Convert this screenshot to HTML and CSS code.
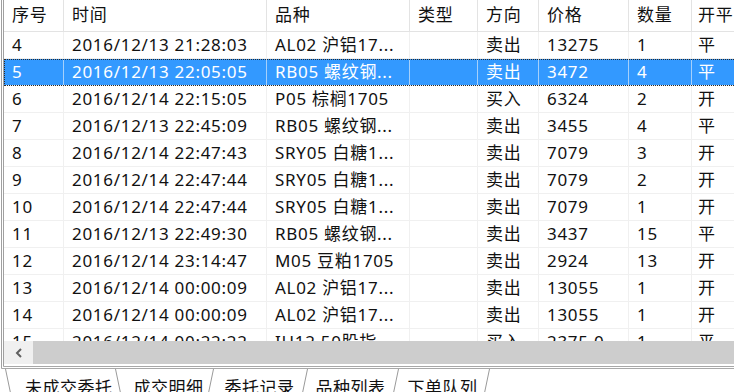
FILE: index.html
```html
<!DOCTYPE html>
<html lang="zh-CN">
<head>
<meta charset="utf-8">
<title>成交明细</title>
<link rel="stylesheet" href="styles.css">
</head>
<body>
<div class="frame">
  <div class="row head">
    <div class="c">序号</div><div class="c">时间</div><div class="c">品种</div><div class="c">类型</div><div class="c">方向</div><div class="c">价格</div><div class="c">数量</div><div class="c last">开平</div>
  </div>
  <div class="body">
    <div class="row"><div class="c">4</div><div class="c">2016/12/13 21:28:03</div><div class="c">AL02 沪铝17...</div><div class="c"></div><div class="c">卖出</div><div class="c">13275</div><div class="c">1</div><div class="c last">平</div></div>
    <div class="row sel"><div class="c">5</div><div class="c">2016/12/13 22:05:05</div><div class="c">RB05 螺纹钢...</div><div class="c"></div><div class="c">卖出</div><div class="c">3472</div><div class="c">4</div><div class="c last">平</div></div>
    <div class="row"><div class="c">6</div><div class="c">2016/12/14 22:15:05</div><div class="c">P05 棕榈1705</div><div class="c"></div><div class="c">买入</div><div class="c">6324</div><div class="c">2</div><div class="c last">开</div></div>
    <div class="row"><div class="c">7</div><div class="c">2016/12/13 22:45:09</div><div class="c">RB05 螺纹钢...</div><div class="c"></div><div class="c">卖出</div><div class="c">3455</div><div class="c">4</div><div class="c last">平</div></div>
    <div class="row"><div class="c">8</div><div class="c">2016/12/14 22:47:43</div><div class="c">SRY05 白糖1...</div><div class="c"></div><div class="c">卖出</div><div class="c">7079</div><div class="c">3</div><div class="c last">开</div></div>
    <div class="row"><div class="c">9</div><div class="c">2016/12/14 22:47:44</div><div class="c">SRY05 白糖1...</div><div class="c"></div><div class="c">卖出</div><div class="c">7079</div><div class="c">2</div><div class="c last">开</div></div>
    <div class="row"><div class="c">10</div><div class="c">2016/12/14 22:47:44</div><div class="c">SRY05 白糖1...</div><div class="c"></div><div class="c">卖出</div><div class="c">7079</div><div class="c">1</div><div class="c last">开</div></div>
    <div class="row"><div class="c">11</div><div class="c">2016/12/13 22:49:30</div><div class="c">RB05 螺纹钢...</div><div class="c"></div><div class="c">卖出</div><div class="c">3437</div><div class="c">15</div><div class="c last">平</div></div>
    <div class="row"><div class="c">12</div><div class="c">2016/12/14 23:14:47</div><div class="c">M05 豆粕1705</div><div class="c"></div><div class="c">卖出</div><div class="c">2924</div><div class="c">13</div><div class="c last">开</div></div>
    <div class="row"><div class="c">13</div><div class="c">2016/12/14 00:00:09</div><div class="c">AL02 沪铝17...</div><div class="c"></div><div class="c">卖出</div><div class="c">13055</div><div class="c">1</div><div class="c last">开</div></div>
    <div class="row"><div class="c">14</div><div class="c">2016/12/14 00:00:09</div><div class="c">AL02 沪铝17...</div><div class="c"></div><div class="c">卖出</div><div class="c">13055</div><div class="c">1</div><div class="c last">开</div></div>
    <div class="row"><div class="c">15</div><div class="c">2016/12/14 00:22:22</div><div class="c">IH12 50股指...</div><div class="c"></div><div class="c">买入</div><div class="c">2375.0</div><div class="c">1</div><div class="c last">平</div></div>
  </div>
  <div class="hscroll">
    <div class="arrow"><svg width="8" height="10" viewBox="0 0 8 10"><polyline points="6,1 2,5 6,9" fill="none" stroke="#606060" stroke-width="2"/></svg></div>
    <div class="thumb"></div>
  </div>
</div>
<div class="tabs">
  <svg class="sep" width="8" height="24" viewBox="0 0 8 24"><line x1="1.5" y1="0" x2="6.5" y2="24" stroke="#9a9a9a" stroke-width="1"/></svg>
  <span class="tab t1">未成交委托</span>
  <svg class="sep" width="8" height="24" viewBox="0 0 8 24"><line x1="1.5" y1="0" x2="6.5" y2="24" stroke="#9a9a9a" stroke-width="1"/></svg>
  <span class="tab t2 active">成交明细</span>
  <svg class="sep" width="8" height="24" viewBox="0 0 8 24"><line x1="6.5" y1="0" x2="1.5" y2="24" stroke="#9a9a9a" stroke-width="1"/></svg>
  <span class="tab t3">委托记录</span>
  <svg class="sep" width="8" height="24" viewBox="0 0 8 24"><line x1="6.5" y1="0" x2="1.5" y2="24" stroke="#9a9a9a" stroke-width="1"/></svg>
  <span class="tab t4">品种列表</span>
  <svg class="sep" width="8" height="24" viewBox="0 0 8 24"><line x1="6.5" y1="0" x2="1.5" y2="24" stroke="#9a9a9a" stroke-width="1"/></svg>
  <span class="tab t5">下单队列</span>
  <svg class="sep" width="8" height="24" viewBox="0 0 8 24"><line x1="6.5" y1="0" x2="1.5" y2="24" stroke="#9a9a9a" stroke-width="1"/></svg>
</div>
</body>
</html>
```
FILE: styles.css
```css
html, body {
  margin: 0;
  padding: 0;
  background: #ffffff;
  overflow: hidden;
}
body {
  width: 734px;
  height: 392px;
  font-family: "Noto Sans", "Noto Sans CJK SC", sans-serif;
  font-size: 17px;
  color: #111111;
}
.frame {
  margin-left: 1px;
  border-left: 3px double #a0a0a0;
  border-bottom: 3px double #a8a8a8;
  padding-bottom: 2px;
  overflow: hidden;
  background: #fff;
  letter-spacing: 0.7px;
}
.row {
  display: grid;
  grid-template-columns: 60px 203px 143px 68px 61px 90px 63px 100px;
  width: 788px;
  height: 27px;
  box-sizing: border-box;
  border-bottom: 1px solid #f0f0f0;
  align-items: center;
}
.c {
  height: 100%;
  box-sizing: border-box;
  border-right: 1px solid #f0f0f0;
  padding-left: 8px;
  line-height: 26px;
  white-space: nowrap;
  overflow: hidden;
}
.c.last {
  padding-left: 6px;
}
.row.head {
  height: 32px;
  border-bottom: 1px solid #e3e3e3;
}
.row.head .c {
  border-right: 1px solid #e3e3e3;
  line-height: 30px;
}
.body {
  height: 309px;
  overflow: hidden;
}
.row.sel {
  background: #3399ff;
  color: #ffffff;
  outline: 1px dotted #2a2a2a;
  outline-offset: -1px;
}
.row.sel .c {
  border-right-color: #a6d0fb;
}
.hscroll {
  display: flex;
  height: 23px;
  background: #f0f0f0;
}
.arrow {
  width: 29px;
  display: flex;
  align-items: center;
  justify-content: center;
}
.thumb {
  flex: 1;
  background: #cdcdcd;
}
.tabs {
  display: flex;
  align-items: flex-start;
  height: 23px;
  padding-left: 4px;
  background: #ffffff;
  overflow: hidden;
  letter-spacing: 0.5px;
}
.sep {
  flex: none;
  display: block;
}
.tab {
  flex: none;
  font-size: 17px;
  line-height: 17px;
  padding-top: 10px;
  color: #111111;
  white-space: nowrap;
}
.t1 { margin: 0 1px 0 13px; }
.t2 { margin: 0 3px 0 12px; }
.t3 { margin: 0 6px 0 10px; }
.t4 { margin: 0 6px 0 7px; }
.t5 { margin: 0 5px 0 8px; }
```
